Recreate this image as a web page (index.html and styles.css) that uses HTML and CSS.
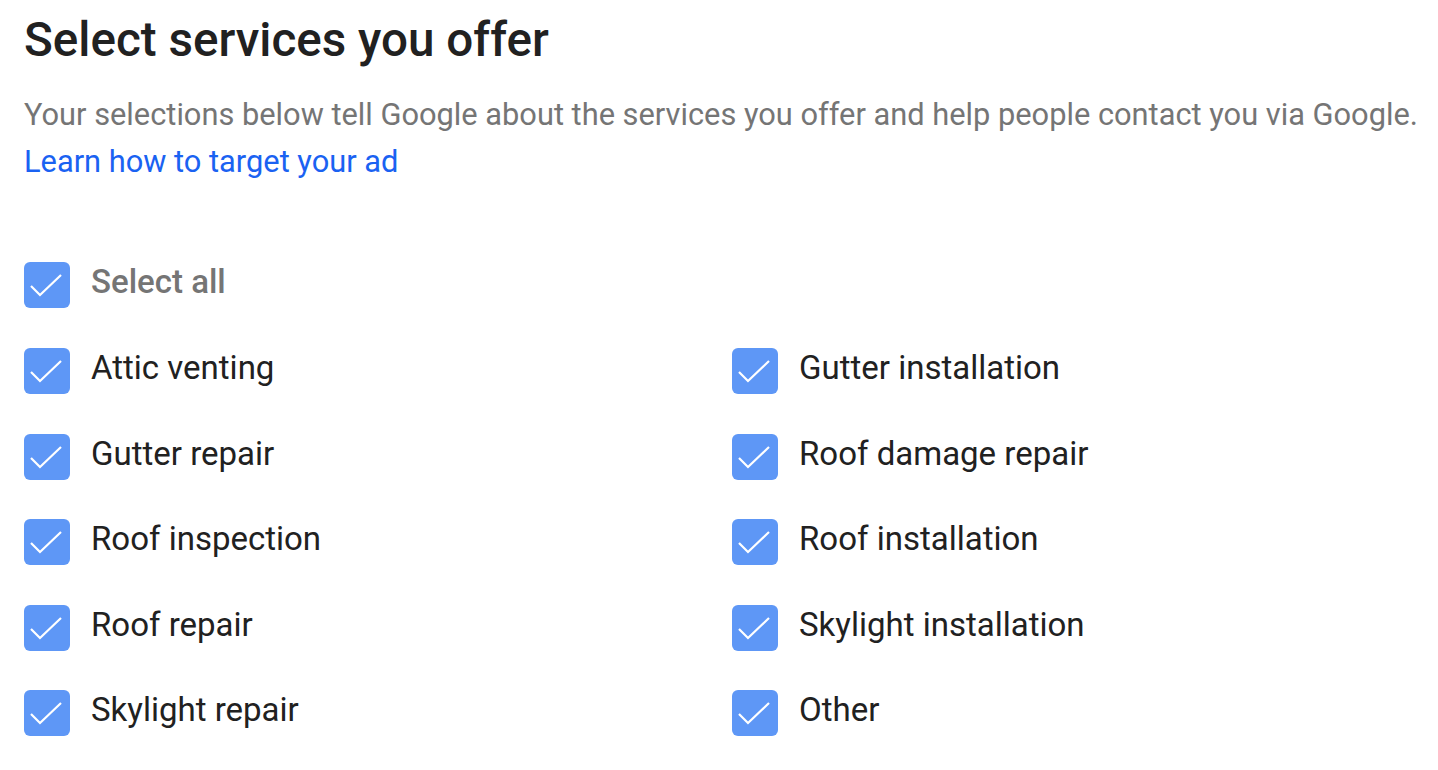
FILE: index.html
```html
<!DOCTYPE html>
<html>
<head>
<meta charset="utf-8">
<link rel="stylesheet" href="styles.css">
</head>
<body>
<main class="page">
  <h1 class="title">Select services you offer</h1>
  <p class="desc">Your selections below tell Google about the services you offer and help people contact you via Google.</p>
  <a class="link" href="#">Learn how to target your ad</a>

  <div class="option select-all">
    <span class="box"><svg viewBox="0 0 46 46" width="46" height="46"><path d="M7 24 L16 33 L37 13" fill="none" stroke="#fff" stroke-width="2.2"/></svg></span>
    <span class="label muted">Select all</span>
  </div>

  <div class="grid">
    <div class="option"><span class="box"><svg viewBox="0 0 46 46" width="46" height="46"><path d="M7 24 L16 33 L37 13" fill="none" stroke="#fff" stroke-width="2.2"/></svg></span><span class="label">Attic venting</span></div>
    <div class="option"><span class="box"><svg viewBox="0 0 46 46" width="46" height="46"><path d="M7 24 L16 33 L37 13" fill="none" stroke="#fff" stroke-width="2.2"/></svg></span><span class="label">Gutter installation</span></div>
    <div class="option"><span class="box"><svg viewBox="0 0 46 46" width="46" height="46"><path d="M7 24 L16 33 L37 13" fill="none" stroke="#fff" stroke-width="2.2"/></svg></span><span class="label">Gutter repair</span></div>
    <div class="option"><span class="box"><svg viewBox="0 0 46 46" width="46" height="46"><path d="M7 24 L16 33 L37 13" fill="none" stroke="#fff" stroke-width="2.2"/></svg></span><span class="label">Roof damage repair</span></div>
    <div class="option"><span class="box"><svg viewBox="0 0 46 46" width="46" height="46"><path d="M7 24 L16 33 L37 13" fill="none" stroke="#fff" stroke-width="2.2"/></svg></span><span class="label">Roof inspection</span></div>
    <div class="option"><span class="box"><svg viewBox="0 0 46 46" width="46" height="46"><path d="M7 24 L16 33 L37 13" fill="none" stroke="#fff" stroke-width="2.2"/></svg></span><span class="label">Roof installation</span></div>
    <div class="option"><span class="box"><svg viewBox="0 0 46 46" width="46" height="46"><path d="M7 24 L16 33 L37 13" fill="none" stroke="#fff" stroke-width="2.2"/></svg></span><span class="label">Roof repair</span></div>
    <div class="option"><span class="box"><svg viewBox="0 0 46 46" width="46" height="46"><path d="M7 24 L16 33 L37 13" fill="none" stroke="#fff" stroke-width="2.2"/></svg></span><span class="label">Skylight installation</span></div>
    <div class="option"><span class="box"><svg viewBox="0 0 46 46" width="46" height="46"><path d="M7 24 L16 33 L37 13" fill="none" stroke="#fff" stroke-width="2.2"/></svg></span><span class="label">Skylight repair</span></div>
    <div class="option"><span class="box"><svg viewBox="0 0 46 46" width="46" height="46"><path d="M7 24 L16 33 L37 13" fill="none" stroke="#fff" stroke-width="2.2"/></svg></span><span class="label">Other</span></div>
  </div>
</main>
</body>
</html>
```

FILE: styles.css
```css
html, body {
  margin: 0;
  padding: 0;
  background: #fff;
}
body {
  font-family: Roboto, "Liberation Sans", Arial, sans-serif;
  color: #202124;
}
.page {
  padding: 14px 24px 0 24px;
}
.title {
  margin: 0;
  font-size: 47.6px;
  font-weight: 500;
  line-height: 52px;
  color: #212121;
}
.desc {
  margin: 26px 0 0 0;
  font-size: 30.8px;
  line-height: 46px;
  color: #757575;
  white-space: nowrap;
}
.link {
  display: inline-block;
  font-size: 30.8px;
  line-height: 47px;
  color: #1a62f2;
  text-decoration: none;
}
.option {
  display: flex;
  align-items: center;
  height: 46px;
}
.select-all {
  margin-top: 77px;
}
.box {
  width: 46px;
  height: 46px;
  flex: none;
  border-radius: 6px;
  background: #5e97f6;
  display: block;
}
.box svg {
  display: block;
}
.label {
  margin-left: 21px;
  font-size: 33px;
  line-height: 40px;
  margin-top: -6px;
  color: #212121;
}
.muted {
  color: #757575;
  font-weight: 500;
}
.grid {
  margin-top: 40px;
  display: grid;
  grid-template-columns: 708px 1fr;
  row-gap: 39.5px;
}
```
